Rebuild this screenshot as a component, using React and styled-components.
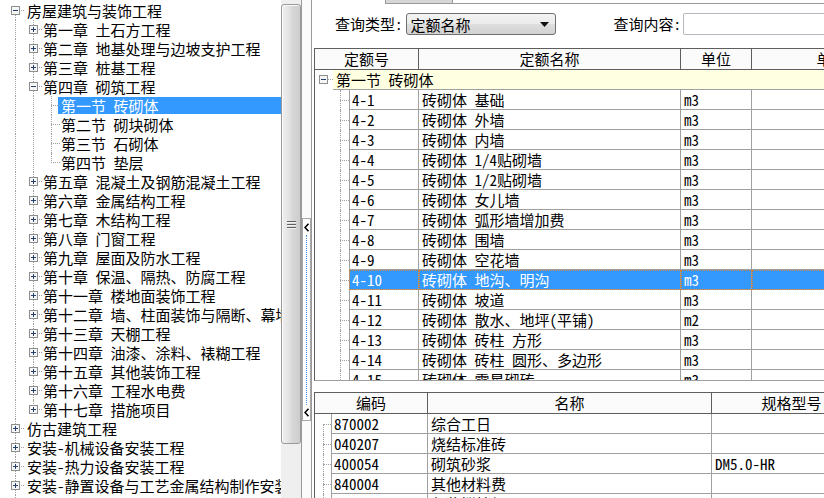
import React from 'react';
import styled, { createGlobalStyle, css } from 'styled-components';

const FONT = `"Noto Sans Mono CJK SC", "Liberation Mono", "Noto Sans CJK SC", monospace`;

const Global = createGlobalStyle`
  html, body { margin: 0; padding: 0; background: #fff; overflow: hidden; }
  body { font-family: ${FONT}; font-size: 15px; color: #000; }
  #root { width: 824px; height: 498px; }
`;

const Window = styled.div`
  display: flex;
  width: 824px;
  height: 498px;
  overflow: hidden;
  background: #fff;
`;

/* ---------- left tree ---------- */
const LeftPanel = styled.div`
  display: flex;
  flex: none;
  width: 302px;
  height: 100%;
  box-sizing: border-box;
  border-right: 1px solid #9a9a9a;
`;

const Tree = styled.div`
  width: 281px;
  flex: none;
  overflow: hidden;
  padding: 1px 0 0 6px;
  box-sizing: border-box;
`;

const TreeRow = styled.div`
  display: flex;
  height: 19px;
  white-space: nowrap;
`;

const Guide = styled.span`
  position: relative;
  flex: none;
  width: ${p => p.$w || 18}px;
  height: ${p => p.$h || 19}px;
  display: flex;
  align-items: flex-start;
  justify-content: flex-start;
  box-sizing: border-box;
  padding: ${p => p.$cy - 4}px 0 0 ${p => p.$x - 4}px;
  &::before {
    content: '';
    position: absolute;
    left: ${p => p.$x}px;
    top: ${p => (p.$up ? 0 : p.$cy)}px;
    bottom: ${p => (p.$down ? 0 : (p.$h || 19) - p.$cy - 1)}px;
    border-left: 1px dotted #a0a0a0;
    display: ${p => (p.$up || p.$down ? 'block' : 'none')};
  }
  &::after {
    content: '';
    position: absolute;
    left: ${p => p.$x}px;
    right: 0;
    top: ${p => p.$cy}px;
    border-top: 1px dotted #a0a0a0;
    display: ${p => (p.$stub ? 'block' : 'none')};
  }
`;

const TreeLabel = styled.span`
  margin: 1px 0 0 ${p => (p.$root ? 2 : 0)}px;
  padding: 0 1px;
  height: 17px;
  line-height: 17px;
  ${p => p.$selected && css`
    flex: 1;
    margin-left: -2px;
    padding-left: 3px;
    background: #3399ff;
    color: #fff;
  `}
`;

const ExpBox = styled.svg`
  position: relative;
  z-index: 1;
  flex: none;
  display: block;
`;

function Expander({ open }) {
  return (
    <ExpBox width="9" height="9" viewBox="0 0 9 9">
      <rect x="0.5" y="0.5" width="8" height="8" fill="#f6f6f6" stroke="#8e8e8e" />
      <path d="M2 4.5H7" stroke="#23406f" />
      {!open && <path d="M4.5 2V7" stroke="#23406f" />}
    </ExpBox>
  );
}

const ScrollTrack = styled.div`
  width: 20px;
  flex: none;
  background: #efefef;
  padding-top: 4px;
  box-sizing: border-box;
`;

const Thumb = styled.div`
  height: 440px;
  box-sizing: border-box;
  border: 1px solid #9a9a9a;
  border-radius: 3px;
  background: linear-gradient(to right, #f0f0f0, #e4e4e4 35%, #d6d6d6 60%, #cdcdcd);
  box-shadow: inset 1px 1px 0 #fafafa;
  display: flex;
  align-items: center;
  justify-content: center;
`;

/* ---------- splitter ---------- */
const Splitter = styled.div`
  width: 9px;
  flex: none;
  background: #fbfbfb;
  padding-top: 218px;
  box-sizing: border-box;
`;

const SplitHandle = styled.div`
  height: 203px;
  box-sizing: border-box;
  border: 1px solid #a8a8a8;
  background: #fff;
  display: flex;
  flex-direction: column;
  align-items: center;
  padding: 4px 0 3px;
`;

const Dots = styled.div`
  flex: 1;
  margin: 3px 0;
  border-left: 1px dotted #3a8ee6;
`;

function Chevron() {
  return (
    <svg width="6" height="9" viewBox="0 0 6 9">
      <polyline points="4.5,0.8 1,4.5 4.5,8.2" fill="none" stroke="#000" strokeWidth="1.6" />
    </svg>
  );
}

/* ---------- right panel ---------- */
const Right = styled.div`
  flex: 1;
  min-width: 0;
  display: flex;
  flex-direction: column;
  border-left: 1px solid #9a9a9a;
  overflow: hidden;
`;

const TabStrip = styled.div`
  display: flex;
  height: 4px;
  flex: none;
`;
const TabGap = styled.div`
  width: 73px;
  flex: none;
`;
const TabStub = styled.div`
  width: 68px;
  flex: none;
  box-sizing: border-box;
  background: #d6d6d6;
  border: 1px solid #9a9a9a;
  border-top: none;
`;
const TabRest = styled.div`
  flex: 1;
  border-bottom: 1px solid #9a9a9a;
`;

const QueryRow = styled.div`
  display: flex;
  align-items: center;
  height: 22px;
  margin-top: 9px;
  padding-left: 23px;
  flex: none;
  white-space: nowrap;
`;

const QueryLabel = styled.span`
  margin-left: ${p => p.$gap || 0}px;
  line-height: 22px;
`;

const Combo = styled.div`
  width: 150px;
  height: 22px;
  margin-left: 3px;
  flex: none;
  box-sizing: border-box;
  border: 1px solid #707070;
  border-radius: 3px;
  background: linear-gradient(#f3f3f3, #ebebeb 50%, #dedede 51%, #d2d2d2);
  display: flex;
  align-items: center;
  justify-content: space-between;
  padding: 0 6px 0 4px;
`;

const TextInput = styled.div`
  width: 200px;
  height: 22px;
  margin-left: 2px;
  flex: none;
  box-sizing: border-box;
  border: 1px solid #b5b7be;
  border-radius: 2px;
  background: #fff;
`;

const Grid = styled.div`
  flex: ${p => (p.$fill ? 1 : 'none')};
  height: ${p => (p.$height ? `${p.$height}px` : 'auto')};
  width: 620px;
  margin: ${p => p.$top}px 0 0 2px;
  box-sizing: border-box;
  border-top: 1px solid #5e5e5e;
  border-left: 1px solid #5e5e5e;
  border-bottom: ${p => (p.$fill ? 'none' : '1px solid #a0a0a0')};
  overflow: hidden;
`;

const HeaderRow = styled.div`
  display: flex;
  height: 21px;
  box-sizing: border-box;
  border-bottom: 1px solid #5e5e5e;
  background: #fbfbfb;
`;

const HCell = styled.div`
  flex: none;
  width: ${p => p.$w}px;
  box-sizing: border-box;
  border-right: 1px solid #5e5e5e;
  text-align: center;
  line-height: 20px;
  white-space: nowrap;
`;

const Row = styled.div`
  display: flex;
  height: 20px;
  white-space: nowrap;
`;

const GroupCell = styled.div`
  flex: 1;
  box-sizing: border-box;
  background: #ffffe1;
  border-bottom: 1px solid #a0a0a0;
  padding-left: 3px;
  line-height: 19px;
`;

const Cell = styled.div`
  flex: none;
  width: ${p => p.$w}px;
  height: 20px;
  box-sizing: border-box;
  border-right: 1px solid #a0a0a0;
  border-bottom: 1px solid #a0a0a0;
  ${p => p.$first && css`border-left: 1px solid #a0a0a0;`}
  padding-left: ${p => (p.$first ? 2 : 3)}px;
  line-height: 19px;
  overflow: hidden;
  ${p => p.$sel && css`
    background: #3399ff;
    color: #fff;
    outline: 1px dotted #c9803c;
    outline-offset: -1px;
  `}
`;

/* ---------- data ---------- */
const chapters = [
  '第一章 土石方工程', '第二章 地基处理与边坡支护工程', '第三章 桩基工程', '第四章 砌筑工程',
  '第五章 混凝土及钢筋混凝土工程', '第六章 金属结构工程', '第七章 木结构工程', '第八章 门窗工程',
  '第九章 屋面及防水工程', '第十章 保温、隔热、防腐工程', '第十一章 楼地面装饰工程',
  '第十二章 墙、柱面装饰与隔断、幕墙工程', '第十三章 天棚工程', '第十四章 油漆、涂料、裱糊工程',
  '第十五章 其他装饰工程', '第十六章 工程水电费', '第十七章 措施项目',
];
const sections = ['第一节 砖砌体', '第二节 砌块砌体', '第三节 石砌体', '第四节 垫层'];
const roots = [
  '仿古建筑工程', '安装-机械设备安装工程', '安装-热力设备安装工程',
  '安装-静置设备与工艺金属结构制作安装工程', '安装-电气设备安装工程',
];

const treeRows = [];
treeRows.push({ level: 0, text: '房屋建筑与装饰工程', exp: 'minus', cont: [], up: false, down: true });
chapters.forEach((c, i) => {
  treeRows.push({ level: 1, text: c, exp: i === 3 ? 'minus' : 'plus', cont: [true], up: true, down: i !== 16 });
  if (i === 3) {
    sections.forEach((s, j) =>
      treeRows.push({ level: 2, text: s, cont: [true, true], up: true, down: j < 3, selected: j === 0 })
    );
  }
});
roots.forEach(r => treeRows.push({ level: 0, text: r, exp: 'plus', cont: [], up: true, down: true }));

const quotaRows = [
  ['4-1', '砖砌体 基础', 'm3'],
  ['4-2', '砖砌体 外墙', 'm3'],
  ['4-3', '砖砌体 内墙', 'm3'],
  ['4-4', '砖砌体 1/4贴砌墙', 'm3'],
  ['4-5', '砖砌体 1/2贴砌墙', 'm3'],
  ['4-6', '砖砌体 女儿墙', 'm3'],
  ['4-7', '砖砌体 弧形墙增加费', 'm3'],
  ['4-8', '砖砌体 围墙', 'm3'],
  ['4-9', '砖砌体 空花墙', 'm3'],
  ['4-10', '砖砌体 地沟、明沟', 'm3'],
  ['4-11', '砖砌体 坡道', 'm3'],
  ['4-12', '砖砌体 散水、地坪(平铺)', 'm2'],
  ['4-13', '砖砌体 砖柱 方形', 'm3'],
  ['4-14', '砖砌体 砖柱 圆形、多边形', 'm3'],
  ['4-15', '砖砌体 零星砌砖', 'm3'],
];

const materialRows = [
  ['870002', '综合工日', ''],
  ['040207', '烧结标准砖', ''],
  ['400054', '砌筑砂浆', 'DM5.0-HR'],
  ['840004', '其他材料费', ''],
  ['990610', '灰浆搅拌机', ''],
];

export default function App() {
  return (
    <>
      <Global />
      <Window>
        <LeftPanel>
          <Tree>
            {treeRows.map((r, i) => (
              <TreeRow key={i}>
                {r.cont.map((c, k) => (
                  <Guide key={k} $x={9} $cy={9} $up={c} $down={c} />
                ))}
                <Guide $x={9} $cy={9} $up={r.up} $down={r.down} $stub>
                  {r.exp && <Expander open={r.exp === 'minus'} />}
                </Guide>
                <TreeLabel $root={r.level === 0} $selected={r.selected}>{r.text}</TreeLabel>
              </TreeRow>
            ))}
          </Tree>
          <ScrollTrack>
            <Thumb>
              <svg width="9" height="9" viewBox="0 0 9 9">
                <path d="M0 1.5H9M0 4.5H9M0 7.5H9" stroke="#606060" />
                <path d="M0 2.5H9M0 5.5H9M0 8.5H9" stroke="#f4f4f4" />
              </svg>
            </Thumb>
          </ScrollTrack>
        </LeftPanel>

        <Splitter>
          <SplitHandle>
            <Chevron />
            <Dots />
            <Chevron />
          </SplitHandle>
        </Splitter>

        <Right>
          <TabStrip>
            <TabGap />
            <TabStub />
            <TabRest />
          </TabStrip>

          <QueryRow>
            <QueryLabel>查询类型:</QueryLabel>
            <Combo>
              <span>定额名称</span>
              <svg width="9" height="5" viewBox="0 0 9 5">
                <path d="M0 0H9L4.5 5Z" fill="#111" />
              </svg>
            </Combo>
            <QueryLabel $gap={58}>查询内容:</QueryLabel>
            <TextInput />
          </QueryRow>

          <Grid $top={13} $height={333}>
            <HeaderRow>
              <HCell $w={104}>定额号</HCell>
              <HCell $w={262}>定额名称</HCell>
              <HCell $w={71}>单位</HCell>
              <HCell $w={160}>单价</HCell>
            </HeaderRow>
            <Row>
              <Guide $w={18} $h={20} $x={8} $cy={9} $stub>
                <Expander open />
              </Guide>
              <GroupCell>第一节 砖砌体</GroupCell>
            </Row>
            {quotaRows.map((q) => {
              const sel = q[0] === '4-10';
              return (
                <Row key={q[0]}>
                  <Guide $w={34} $h={20} $x={25} $cy={10} $up $down $stub />
                  <Cell $w={70} $first $sel={sel}>{q[0]}</Cell>
                  <Cell $w={262} $sel={sel}>{q[1]}</Cell>
                  <Cell $w={71} $sel={sel}>{q[2]}</Cell>
                  <Cell $w={160} $sel={sel}></Cell>
                </Row>
              );
            })}
          </Grid>

          <Grid $top={11} $fill>
            <HeaderRow>
              <HCell $w={113}>编码</HCell>
              <HCell $w={284}>名称</HCell>
              <HCell $w={160}>规格型号</HCell>
            </HeaderRow>
            {materialRows.map((m, i) => (
              <Row key={m[0]}>
                <Guide $w={16} $h={20} $x={8} $cy={10} $up={i > 0} $down $stub />
                <Cell $w={97} $first>{m[0]}</Cell>
                <Cell $w={284}>{m[1]}</Cell>
                <Cell $w={160}>{m[2]}</Cell>
              </Row>
            ))}
          </Grid>
        </Right>
      </Window>
    </>
  );
}
